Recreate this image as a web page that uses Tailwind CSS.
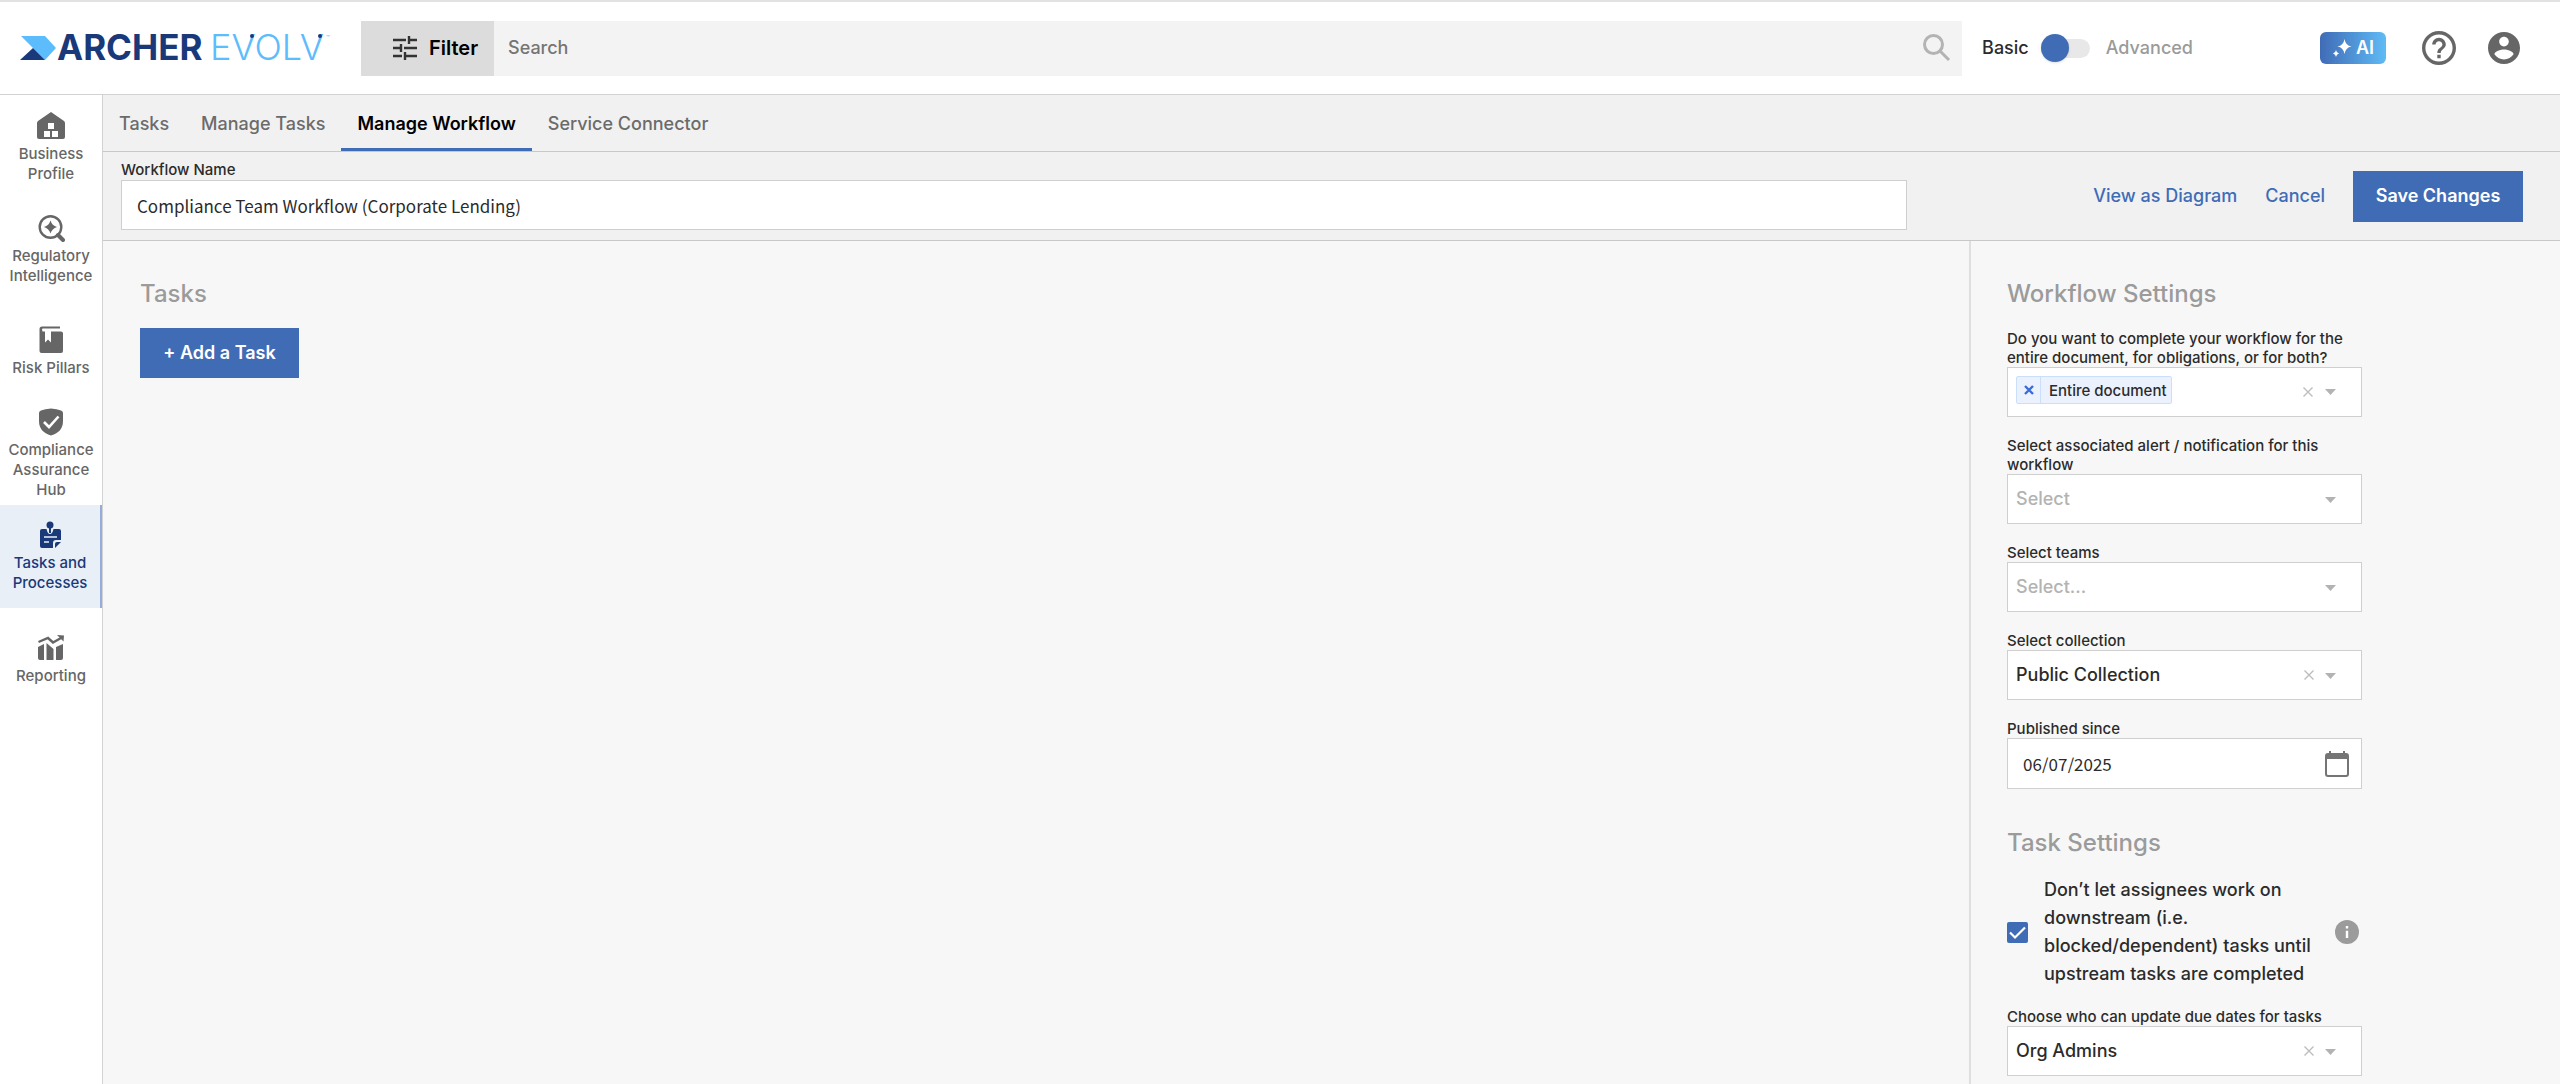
<!DOCTYPE html>
<html lang="en">
<head>
  <meta charset="UTF-8">
  <meta name="viewport" content="width=device-width, initial-scale=1.0">
  <title>Manage Workflow - Archer Evolv</title>
  <script src="https://cdn.jsdelivr.net/npm/@tailwindcss/browser@4"></script>
  <style>
    body {
      font-family: 'Inter', sans-serif;
    }
  </style>
</head>
<body class="min-h-screen overflow-hidden flex flex-col bg-[#f7f7f7] text-[#2b2b2b] font-medium">
  <!-- Header -->
  <header class="h-[95px] shrink-0 flex items-center bg-white border-t-2 border-t-[#e2e2e2] border-b border-b-[#d2d2d2] pl-5 pr-10">
    <a href="#" aria-label="Archer Evolv" class="w-[341px] shrink-0">
      <svg class="w-[330px] h-12" viewBox="0 -8 330 48">
        <path d="M1 4h24l11 12-11 12L13 16z" fill="#5dbcfb"/>
        <path d="M0 28l13-12 12 12z" fill="#19397a"/>
        <text x="37" y="28" font-family="Inter" font-size="35" font-weight="700" fill="#19397a">ARCHER</text>
        <text x="190" y="28" font-family="Inter" font-size="36" font-weight="300" fill="#5dbcfb">EVOLV</text>
        <text x="306" y="8" font-family="Inter" font-size="6" fill="#5dbcfb">™</text>
        <circle cx="232" cy="4" r="2" fill="#19397a"/>
        <circle cx="300" cy="4" r="2" fill="#19397a"/>
      </svg>
    </a>
    <form class="flex-1 flex h-[55px] bg-[#f3f3f3]">
      <button type="button" class="w-[133px] flex items-center justify-center gap-3 pl-4 bg-[#dcdcdc] text-black text-xl font-semibold">
        <svg class="w-6 h-6" viewBox="0 0 24 24" fill="none" stroke="#333" stroke-width="2.4"><path d="M0 4h13M17 4h7M16 0v8M0 12h7M11 12h13M8 8v8M0 20h9M12 20h12M12 16v8"/></svg>
        Filter
      </button>
      <input type="search" aria-label="Search" placeholder="Search" class="flex-1 px-3.5 text-lg outline-none placeholder:text-[#757575]">
      <button type="submit" aria-label="Run search" class="w-[50px] flex items-center justify-center">
        <svg class="w-7 h-7" viewBox="0 0 28 28" fill="none" stroke="#b3b3b3" stroke-width="3"><circle cx="10.500" cy="10.500" r="9"/><path d="M17 17l9 9"/></svg>
      </button>
    </form>
    <label class="ml-5 flex items-center gap-3 text-lg">
      Basic
      <input type="checkbox" role="switch" aria-label="Advanced search" class="peer sr-only">
      <span class="relative w-[49px] h-7 flex items-center justify-end">
        <span class="w-[38px] h-[19px] rounded-full bg-[#e8e8e8]"></span>
        <span class="absolute left-0 top-0 size-7 rounded-full bg-[#406cb6] shadow"></span>
      </span>
      <span class="ml-1 text-[#9a9a9a]">Advanced</span>
    </label>
    <div class="ml-[127px] flex items-center">
      <button class="w-[66px] h-8 flex items-center justify-center gap-1 rounded-md bg-linear-to-r from-[#406cb6] to-[#5fbbf5] text-white text-lg font-semibold">
        <svg class="size-5" viewBox="0 0 20 20" fill="#fff"><path d="M12.500 1q1 6.500 7 7.500-6 1-7 7.500-1-6.500-7-7.500 6-1 7-7.500zM4 12q.5 3 3 3.500-2.500.5-3 3.500-.5-3-3-3.500 2.500-.5 3-3.500z"/></svg>
        AI
      </button>
      <button aria-label="Help" class="ml-9">
        <svg class="size-[34px]" viewBox="2 2 20 20" fill="#666"><path d="M11 18h2v-2h-2v2zm1-16C6.480 2 2 6.480 2 12s4.480 10 10 10 10-4.480 10-10S17.520 2 12 2zm0 18c-4.410 0-8-3.590-8-8s3.590-8 8-8 8 3.590 8 8-3.590 8-8 8zm0-14c-2.210 0-4 1.790-4 4h2c0-1.100.9-2 2-2s2 .9 2 2c0 2-3 1.750-3 5h2c0-2.250 3-2.500 3-5 0-2.210-1.790-4-4-4z"/></svg>
      </button>
      <button aria-label="Account" class="ml-8">
        <svg class="size-8" viewBox="2 2 20 20" fill="#666"><path d="M12 2C6.480 2 2 6.480 2 12s4.480 10 10 10 10-4.480 10-10S17.520 2 12 2zm0 3c1.660 0 3 1.340 3 3s-1.340 3-3 3-3-1.340-3-3 1.340-3 3-3zm0 14.200c-2.500 0-4.710-1.280-6-3.220.03-1.990 4-3.080 6-3.080 1.990 0 5.970 1.090 6 3.080-1.290 1.940-3.500 3.220-6 3.220z"/></svg>
      </button>
    </div>
  </header>

  <div class="flex-1 flex">
    <!-- Sidebar -->
    <nav class="w-[103px] shrink-0 pt-0.5 bg-white border-r border-[#d2d2d2] text-center text-[15px] leading-5 text-[#666]">
      <a href="#" class="h-[102px] flex flex-col items-center justify-center gap-1">
        <svg class="size-7" viewBox="0 0 28 28"><path d="M14 0l13 9q1 1 1 2v14q0 2-2 2H2q-2 0-2-2V11q0-1 1-2z" fill="#666"/><path d="M11 11h6v6h-6zM7 19h6v6H7zM15 19h6v6h-6z" fill="#fff"/></svg>
        Business Profile
      </a>
      <a href="#" class="h-[102px] flex flex-col items-center justify-center gap-1">
        <svg class="size-7" viewBox="0 0 28 28"><circle cx="13.500" cy="13" r="10.800" fill="none" stroke="#666" stroke-width="2.400"/><path d="M21 21l5 5" stroke="#666" stroke-width="4" stroke-linecap="round"/><path d="M13.500 6.500q1.500 5 6.500 6.500-5 1.500-6.500 6.500-1.500-5-6.500-6.500 5-1.500 6.500-6.500z" fill="#666"/></svg>
        Regulatory Intelligence
      </a>
      <a href="#" class="h-[102px] flex flex-col items-center justify-center gap-1">
        <svg class="size-7" viewBox="0 0 28 28"><path d="M5 .5h18v2H5.500q-1 .5 0 3H8v11l3-3 3 3v-11h10q2 0 2 2V25q0 2-2 2H4.500q-2 0-2-2V3q0-2.500 2.500-2.500z" fill="#666"/></svg>
        Risk Pillars
      </a>
      <a href="#" class="h-[102px] flex flex-col items-center justify-center gap-1">
        <svg class="size-7" viewBox="0 0 28 28"><path d="M14 .5q6 .5 10 2 2 .5 2 2.500v8q0 11-12 14.500Q2 24 2 13V5q0-2 2-2.500 4-1.500 10-2z" fill="#666"/><path d="M7 14l5 5 9.500-10.500" fill="none" stroke="#fff" stroke-width="2.600"/></svg>
        Compliance Assurance Hub
      </a>
      <a href="#" aria-current="page" class="h-[103px] flex flex-col items-center justify-center gap-1 bg-[#e9eff7] text-[#19397a] border-r-2 border-[#94abdb]">
        <svg class="size-7" viewBox="0 0 28 28"><circle cx="14" cy="4" r="3.500" fill="#19397a"/><path d="M13 6h2v6h-2z" fill="#19397a"/><path d="M6 8h4.500q1 5 3.500 5t3.500-5H23q2 0 2 2v9h-5q-3 0-3 3v5H6q-2 0-2-2V10q0-2 2-2z" fill="#19397a"/><path d="M19 27v-4q0-2 2-2h4z" fill="#19397a"/><path d="M8 16h13M8 21h5" stroke="#e9eff7" stroke-width="1.600"/></svg>
        Tasks and Processes
      </a>
      <a href="#" class="h-[103px] flex flex-col items-center justify-center gap-1">
        <svg class="size-7" viewBox="0 0 28 28"><path d="M1 13l6-3v16H3q-2 0-2-2zM9.500 9L13 12l3.500 3v11h-7zM19 13l7-3v14q0 2-2 2h-5z" fill="#666"/><path d="M1.500 8L11 4l5 4.500L24 4" fill="none" stroke="#666" stroke-width="2.400"/><path d="M20 1l7 .5-.500 6z" fill="#666"/></svg>
        Reporting
      </a>
    </nav>

    <div class="flex-1 flex flex-col">
      <!-- Tabs -->
      <nav class="h-[57px] flex bg-[#f1f1f1] border-b border-[#c8c8c8] text-lg text-[#6b6b6b]">
        <a href="#" class="px-4 pt-1 flex items-center border-b-3 border-transparent">Tasks</a>
        <a href="#" class="px-4 pt-1 flex items-center border-b-3 border-transparent">Manage Tasks</a>
        <a href="#" aria-current="page" class="px-4 pt-1 flex items-center border-b-3 border-[#406cb6] text-black font-semibold">Manage Workflow</a>
        <a href="#" class="px-4 pt-1 flex items-center border-b-3 border-transparent">Service Connector</a>
      </nav>

      <!-- Workflow name and actions -->
      <section class="h-[89px] pl-[18px] pr-[37px] flex justify-between bg-[#f1f1f1] border-b border-[#c8c8c8]">
        <div class="w-3/4 pr-4 pt-2 flex flex-col">
          <label for="workflowName" class="text-[15px] leading-5">Workflow Name</label>
          <input id="workflowName" type="text" value="Compliance Team Workflow (Corporate Lending)" class="h-[50px] px-[15px] bg-white border border-[#cfcfcf] text-[17px] font-normal font-['Noto_Sans_CJK_SC',sans-serif]">
        </div>
        <div class="flex items-center gap-7 text-lg text-[#406cb6]">
          <a href="#">View as Diagram</a>
          <button>Cancel</button>
          <button class="h-[51px] w-[170px] bg-[#406cb6] text-white font-semibold">Save Changes</button>
        </div>
      </section>

      <main class="flex-1 flex">
        <section class="flex-1 pl-[37px] pt-[37px]">
          <h2 class="text-2xl text-[#9b9b9b]">Tasks</h2>
          <button class="mt-[18px] h-[50px] w-[159px] bg-[#406cb6] text-white text-lg font-semibold">+ Add a Task</button>
        </section>

        <!-- Settings -->
        <aside class="w-[591px] pl-9 pt-[37px] border-l-2 border-[#dfdfdf]">
          <form class="w-[355px] text-[15px] leading-[19px]">
            <h2 class="text-2xl text-[#9b9b9b]">Workflow Settings</h2>
            <label for="scope" class="mt-[19px] block">Do you want to complete your workflow for the entire document, for obligations, or for both?</label>
            <div class="h-[50px] flex items-center bg-white border border-[#cfcfcf] pl-2 pr-[25px]">
              <span class="h-7 -mt-1 flex items-center bg-[#ebf2fe] border border-[#c9dffc] rounded-xs">
                <button type="button" aria-label="Remove Entire document" class="w-6 h-full flex items-center justify-center border-r border-[#c9dffc]">
                  <svg class="size-2.5" viewBox="0 0 10 10" stroke="#3b6bd8" stroke-width="2.400"><path d="M1 1l8 8M9 1L1 9"/></svg>
                </button>
                <span class="pl-2 pr-1">Entire document</span>
              </span>
              <input id="scope" type="text" class="flex-1 min-w-0 outline-none">
              <button type="button" aria-label="Clear" class="mr-3"><svg class="size-2.5" viewBox="0 0 10 10" stroke="#bdbdbd" stroke-width="1.400"><path d="M.5.500l9 9M9.500.500l-9 9"/></svg></button>
              <svg class="w-[11px] h-1.5" viewBox="0 0 11 6" fill="#b3b3b3"><path d="M0 0h11L5.500 6z"/></svg>
            </div>

            <label for="alert" class="mt-[19px] block">Select associated alert / notification for this workflow</label>
            <div class="relative">
              <select id="alert" class="w-full h-[50px] px-2 appearance-none bg-white border border-[#cfcfcf] text-lg text-[#b3b3b3]"><option>Select</option></select>
              <svg class="absolute right-[26px] top-[23px] w-[11px] h-1.5" viewBox="0 0 11 6" fill="#b3b3b3"><path d="M0 0h11L5.500 6z"/></svg>
            </div>

            <label for="teams" class="mt-[19px] block">Select teams</label>
            <div class="relative">
              <select id="teams" class="w-full h-[50px] px-2 appearance-none bg-white border border-[#cfcfcf] text-lg text-[#b3b3b3]"><option>Select...</option></select>
              <svg class="absolute right-[26px] top-[23px] w-[11px] h-1.5" viewBox="0 0 11 6" fill="#b3b3b3"><path d="M0 0h11L5.500 6z"/></svg>
            </div>

            <label for="collection" class="mt-[19px] block">Select collection</label>
            <div class="relative">
              <select id="collection" class="w-full h-[50px] px-2 appearance-none bg-white border border-[#cfcfcf] text-lg"><option>Public Collection</option></select>
              <button type="button" aria-label="Clear" class="absolute right-12 top-5"><svg class="size-2.5" viewBox="0 0 10 10" stroke="#bdbdbd" stroke-width="1.400"><path d="M.5.500l9 9M9.500.500l-9 9"/></svg></button>
              <svg class="absolute right-[26px] top-[23px] w-[11px] h-1.5" viewBox="0 0 11 6" fill="#b3b3b3"><path d="M0 0h11L5.500 6z"/></svg>
            </div>

            <label for="since" class="mt-[19px] block">Published since</label>
            <div class="h-[51px] flex items-center bg-white border border-[#cfcfcf] pl-[15px] pr-3">
              <input id="since" type="text" value="06/07/2025" class="flex-1 min-w-0 outline-none text-[17px] font-normal font-['Noto_Sans_CJK_SC',sans-serif]">
              <button type="button" aria-label="Open calendar">
                <svg class="w-6 h-[26px]" viewBox="0 0 24 26"><path d="M3 3h18q2 0 2 2v18q0 2-2 2H3q-2 0-2-2V5q0-2 2-2z" fill="none" stroke="#757575" stroke-width="2"/><path d="M1 4h22v4H1zM4 0h2v4H4zM18 0h2v4h-2z" fill="#757575"/></svg>
              </button>
            </div>

            <h2 class="mt-[38px] text-2xl text-[#9b9b9b]">Task Settings</h2>
            <div class="mt-[17px] flex items-center">
              <input id="block" type="checkbox" checked class="peer size-[21px] shrink-0 appearance-none rounded-xs bg-[#406cb6]">
              <svg class="-ml-[21px] size-[21px] shrink-0 pointer-events-none" viewBox="0 0 21 21" fill="none" stroke="#fff" stroke-width="2.200"><path d="M3 10.500l5 5L18 5.500"/></svg>
              <label for="block" class="ml-4 flex-1 text-lg leading-7">Don’t let assignees work on downstream (i.e. blocked/dependent) tasks until upstream tasks are completed</label>
              <svg class="mr-[3px] size-6 shrink-0" viewBox="0 0 24 24"><circle cx="12" cy="12" r="12" fill="#9b9b9b"/><path d="M10.800 6h2.400v2.400h-2.400zM10.800 10.800h2.400V18h-2.400z" fill="#fff"/></svg>
            </div>

            <label for="dueDates" class="mt-[19px] block">Choose who can update due dates for tasks</label>
            <div class="relative">
              <select id="dueDates" class="w-full h-[50px] px-2 appearance-none bg-white border border-[#cfcfcf] text-lg"><option>Org Admins</option></select>
              <button type="button" aria-label="Clear" class="absolute right-12 top-5"><svg class="size-2.5" viewBox="0 0 10 10" stroke="#bdbdbd" stroke-width="1.400"><path d="M.5.500l9 9M9.500.500l-9 9"/></svg></button>
              <svg class="absolute right-[26px] top-[23px] w-[11px] h-1.5" viewBox="0 0 11 6" fill="#b3b3b3"><path d="M0 0h11L5.500 6z"/></svg>
            </div>
          </form>
        </aside>
      </main>
    </div>
  </div>
</body>
</html>
